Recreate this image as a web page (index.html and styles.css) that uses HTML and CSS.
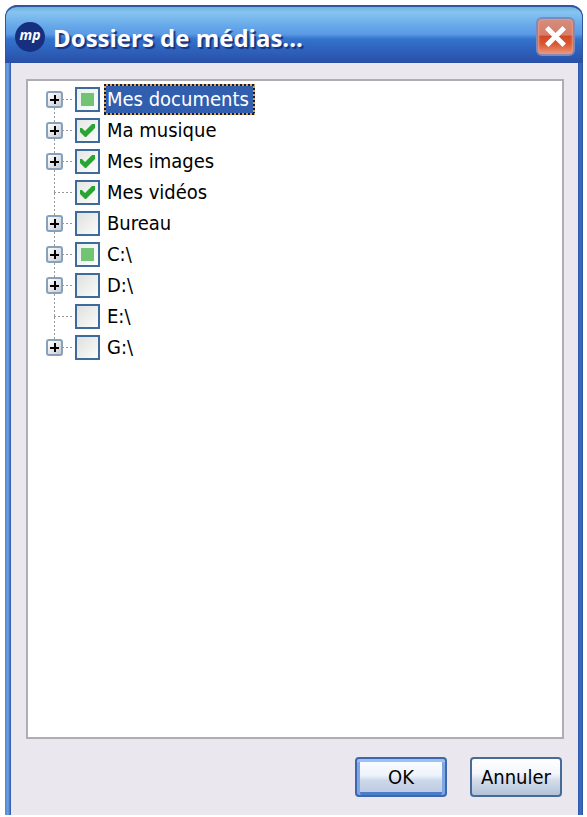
FILE: index.html
```html
<!DOCTYPE html>
<html lang="fr">
<head>
<meta charset="utf-8">
<meta name="viewport" content="width=device-width, initial-scale=1">
<title>Dossiers de médias</title>
<link rel="stylesheet" href="styles.css">
</head>
<body>
<main class="window">
  <header class="titlebar">
    <span class="logo">mp</span>
    <h1 class="title">Dossiers de médias...</h1>
    <button class="close" type="button" aria-label="Fermer">
      <svg viewBox="0 0 32 32" aria-hidden="true"><path d="M7 7L25 25M25 7L7 25"/></svg>
    </button>
  </header>
  <form class="content">
    <ul class="tree">
      <li class="node"><button class="expander" type="button" aria-label="Développer"></button><input class="check mixed" type="checkbox" id="documents"><label class="label selected" for="documents">Mes documents</label></li>
      <li class="node"><button class="expander" type="button" aria-label="Développer"></button><input class="check" type="checkbox" id="musique" checked><label class="label" for="musique">Ma musique</label></li>
      <li class="node"><button class="expander" type="button" aria-label="Développer"></button><input class="check" type="checkbox" id="images" checked><label class="label" for="images">Mes images</label></li>
      <li class="node"><span class="leaf"></span><input class="check" type="checkbox" id="videos" checked><label class="label" for="videos">Mes vidéos</label></li>
      <li class="node"><button class="expander" type="button" aria-label="Développer"></button><input class="check" type="checkbox" id="bureau"><label class="label" for="bureau">Bureau</label></li>
      <li class="node"><button class="expander" type="button" aria-label="Développer"></button><input class="check mixed" type="checkbox" id="disk-c"><label class="label" for="disk-c">C:\</label></li>
      <li class="node"><button class="expander" type="button" aria-label="Développer"></button><input class="check" type="checkbox" id="disk-d"><label class="label" for="disk-d">D:\</label></li>
      <li class="node"><span class="leaf"></span><input class="check" type="checkbox" id="disk-e"><label class="label" for="disk-e">E:\</label></li>
      <li class="node"><button class="expander" type="button" aria-label="Développer"></button><input class="check" type="checkbox" id="disk-g"><label class="label" for="disk-g">G:\</label></li>
    </ul>
    <div class="actions">
      <button class="button default" type="button">OK</button>
      <button class="button" type="button">Annuler</button>
    </div>
  </form>
</main>
</body>
</html>
```
FILE: styles.css
```css
* {
  box-sizing: border-box;
}

body {
  margin: 0;
  min-height: 100vh;
  padding: 5px 4px 2px 5px;
  display: flex;
  background: #fff;
  color: #000;
  font-family: "DejaVu Sans Condensed", "DejaVu Sans", Tahoma, sans-serif;
  font-stretch: condensed;
  font-size: 20px;
}

.window {
  flex: 1;
  display: flex;
  flex-direction: column;
  border-radius: 12px 12px 0 0;
  overflow: hidden;
  background: linear-gradient(90deg, #5585ca 0, #6d9fe2 3px, #2b57ac 6px, #2b57ac calc(100% - 5px), #3e70c4 calc(100% - 2px), #2a4c9c 100%);
}

.titlebar {
  height: 58px;
  flex: none;
  display: flex;
  align-items: center;
  padding: 4px 7px 0 9px;
  border: solid #30559f;
  border-width: 2px 1px 0;
  border-radius: 12px 12px 0 0;
  background: linear-gradient(#6fb0e4 0, #86c5ef 5px, #64a6e9 20px, #5b9ae5 27px, #3474cb 32px, #2f66c2 40px, #2b55ad 52px, #2850a7 100%);
}

.logo {
  width: 30px;
  height: 30px;
  flex: none;
  border-radius: 50%;
  background: #16307f;
  color: #fff;
  font: italic bold 14px/26px "Open Sans", sans-serif;
  text-align: center;
}

.title {
  flex: 1;
  margin: 0 0 0 8px;
  padding-top: 2px;
  color: #fff;
  font: bold 24px/32px "Open Sans", sans-serif;
  text-shadow: 2px 2px 1px #17327f;
  white-space: nowrap;
}

.close {
  width: 39px;
  height: 39px;
  margin-bottom: 1px;
  padding: 2px;
  border: 2px solid #8089b8;
  border-radius: 6px;
  background: linear-gradient(#d28d80 0, #d87d68 45%, #d24a25 50%, #d85630 70%, #ed967a 100%);
  box-shadow: inset 0 0 2px 1px #e59a83;
}

.close svg {
  display: block;
  width: 100%;
  height: 100%;
  fill: none;
  stroke: #fff;
  stroke-width: 5;
}

.content {
  flex: 1;
  display: flex;
  flex-direction: column;
  margin: 0 5px 0 6px;
  padding: 16px 14px 18px 15px;
  background: #eae8ee;
}

.tree {
  flex: 1;
  margin: 0;
  padding: 3px 18px;
  border: 2px solid #aeadb3;
  background: #fff;
  list-style: none;
}

.node {
  position: relative;
  height: 31px;
  display: flex;
  align-items: center;
}

/* Dotted guide lines: horizontal to the tick box, vertical between nodes. */
.node::before {
  content: "";
  position: absolute;
  left: 8px;
  top: 15px;
  width: 18px;
  height: 1px;
  background: repeating-linear-gradient(90deg, #999 0 2px, #fff 2px 4px);
}

.node:not(:last-child)::after {
  content: "";
  position: absolute;
  left: 8px;
  top: 16px;
  width: 1px;
  height: 31px;
  background: repeating-linear-gradient(#999 0 2px, #fff 2px 4px);
}

.expander,
.leaf {
  width: 17px;
  height: 17px;
  flex: none;
}

.expander {
  position: relative;
  z-index: 1;
  padding: 0;
  border: 2px solid #87a1bb;
  border-radius: 3px;
  background:
    linear-gradient(#000, #000) center / 9px 2px no-repeat,
    linear-gradient(#000, #000) center / 2px 9px no-repeat,
    linear-gradient(135deg, #fff, #c9ccd2);
}

.check {
  appearance: none;
  width: 25px;
  height: 25px;
  flex: none;
  margin: 0 4px 0 12px;
  border: 2px solid #3d6c9c;
  background: linear-gradient(135deg, #e0e0de, #fbfbfa);
}

.check:checked {
  background:
    url("data:image/svg+xml,%3Csvg xmlns='http://www.w3.org/2000/svg' viewBox='0 0 21 21'%3E%3Cpath d='M3 8H5L8 11L15 4H18V8L9 17H8L3 12Z' fill='%2329a532'/%3E%3C/svg%3E") center / 21px 21px no-repeat,
    linear-gradient(135deg, #e6e6e4, #fcfcfb);
}

.check.mixed {
  background:
    linear-gradient(#73c374, #73c374) center / 13px 13px no-repeat,
    linear-gradient(135deg, #eaf0ea, #fbfdfb);
}

.label {
  padding: 0 2px;
  border: 1px solid transparent;
  line-height: 29px;
  white-space: nowrap;
}

/* The focus frame alternates dark and amber dots over the selection colour. */
.label.selected {
  padding-right: 6px;
  border: 0;
  padding: 1px 6px 1px 3px;
  background:
    repeating-linear-gradient(90deg, #151d35 0 2px, #d9a05c 2px 4px) top / 100% 2px no-repeat,
    repeating-linear-gradient(90deg, #151d35 0 2px, #d9a05c 2px 4px) bottom / 100% 2px no-repeat,
    repeating-linear-gradient(#151d35 0 2px, #d9a05c 2px 4px) left / 2px 100% no-repeat,
    repeating-linear-gradient(#151d35 0 2px, #d9a05c 2px 4px) right / 2px 100% no-repeat,
    #315fae;
  color: #fff;
}

.actions {
  display: flex;
  justify-content: flex-end;
  gap: 23px;
  padding: 18px 2px 0 0;
}

.button {
  width: 92px;
  height: 40px;
  padding: 0;
  border: 2px solid #456b98;
  border-radius: 4px;
  background: linear-gradient(#fff 0, #f3f6fb 40%, #d3dcea 60%, #b3c2d9 100%);
  color: #000;
  font: inherit;
}

.button.default {
  border-color: #3d68b0;
  background: linear-gradient(#fbfdff 0, #eef4fb 45%, #ccd7ea 60%, #b9c8e1 100%);
  box-shadow: inset 0 3px #9dc0f0, inset 3px 0 #7ea7e3, inset -3px 0 #7ea7e3, inset 0 -3px #4c7bc9;
}
```
